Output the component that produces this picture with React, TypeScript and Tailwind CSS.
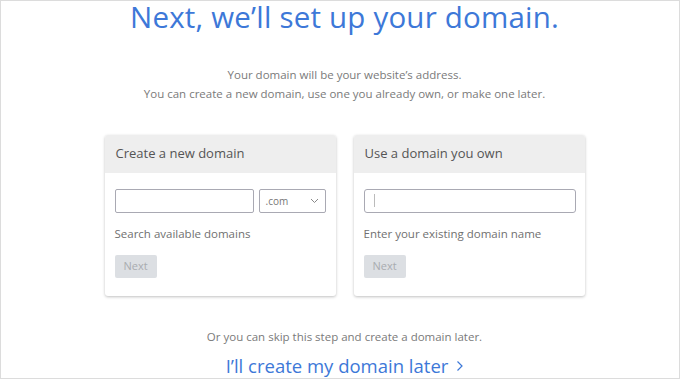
export default function App() {
  return (
    <div
      className="w-[680px] h-[379px] bg-white border border-[#dcdcdc] flex flex-col items-center overflow-hidden pl-[9px]"
      style={{ fontFamily: '"Open Sans", sans-serif' }}
    >
      {/* Heading */}
      <h1 className="text-[29.5px] leading-[32px] text-[#3d78d8] tracking-[0.2px]">
        Next, we’ll set up your domain.
      </h1>

      <div className="mt-[32px] text-center text-[11.5px] leading-[19px] text-[#7a7a7a]">
        <p>Your domain will be your website’s address.</p>
        <p>You can create a new domain, use one you already own, or make one later.</p>
      </div>

      {/* Cards */}
      <div className="mt-[32px] flex gap-[18px]">
        <div className="w-[231px] h-[161px] bg-white rounded-[3px] shadow-[0_1px_3px_rgba(0,0,0,0.25)] overflow-hidden">
          <div className="h-[38px] bg-[#eeeeee] px-[11px] flex items-center text-[13px] text-[#555]">
            Create a new domain
          </div>
          <div className="px-[10px] pt-[16px]">
            <div className="flex gap-[5px]">
              <input className="w-[139px] h-[24px] border border-[#a9a9b3] rounded-[2px] outline-none" />
              <div className="w-[68px] h-[24px] border border-[#a9a9b3] rounded-[2px] flex items-center justify-between px-[6px] text-[10px] text-[#777]">
                <span>.com</span>
                <svg width="9" height="6" viewBox="0 0 9 6" fill="none" stroke="#888" strokeWidth="1">
                  <path d="M1 1l3.5 3.5L8 1" />
                </svg>
              </div>
            </div>
            <p className="mt-[12px] text-[11.5px] leading-[17px] text-[#707070]">Search available domains</p>
            <button className="mt-[13px] w-[42px] h-[23px] rounded-[2px] bg-[#dcdfe3] text-[11px] text-[#a9acb0]">
              Next
            </button>
          </div>
        </div>

        <div className="w-[231px] h-[161px] bg-white rounded-[3px] shadow-[0_1px_3px_rgba(0,0,0,0.25)] overflow-hidden">
          <div className="h-[38px] bg-[#eeeeee] px-[11px] flex items-center text-[13px] text-[#555]">
            Use a domain you own
          </div>
          <div className="px-[10px] pt-[16px]">
            <div className="relative w-[212px] h-[24px] border border-[#a9a9b3] rounded-[3px]">
              <span className="absolute left-[9px] top-[4px] w-px h-[13px] bg-[#bbb]" />
            </div>
            <p className="mt-[12px] text-[11.5px] leading-[17px] text-[#707070]">Enter your existing domain name</p>
            <button className="mt-[13px] w-[42px] h-[23px] rounded-[2px] bg-[#dcdfe3] text-[11px] text-[#a9acb0]">
              Next
            </button>
          </div>
        </div>
      </div>

      <p className="mt-[33px] text-[11.5px] leading-[16px] text-[#7a7a7a]">
        Or you can skip this step and create a domain later.
      </p>
      <a className="mt-[9px] flex items-center gap-[8px] text-[18.5px] leading-[24px] text-[#3d78d8]">
        I’ll create my domain later
        <svg width="7" height="12" viewBox="0 0 7 12" fill="none" stroke="#3d78d8" strokeWidth="1.2">
          <path d="M1.5 1.5l4.5 4.5-4.5 4.5" />
        </svg>
      </a>
    </div>
  );
}
